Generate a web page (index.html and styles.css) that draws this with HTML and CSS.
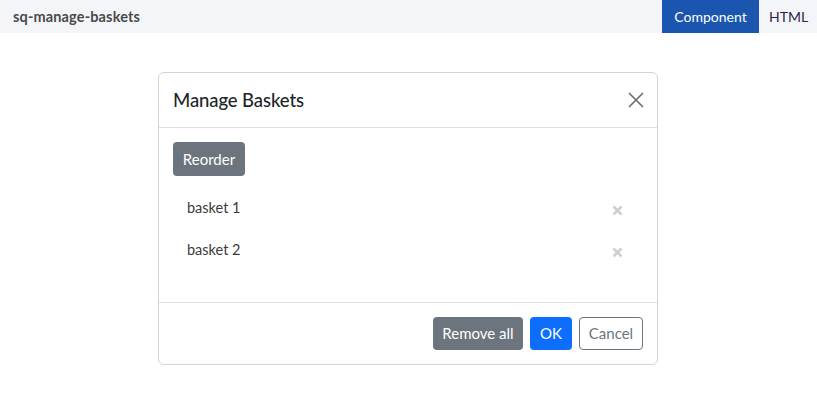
FILE: index.html
```html
<!DOCTYPE html>
<html>
<head>
<meta charset="utf-8">
<link rel="stylesheet" href="styles.css">
</head>
<body>
<div class="topbar">
  <div class="app-name">sq-manage-baskets</div>
  <div class="tabs">
    <div class="tab active">Component</div>
    <div class="tab">HTML</div>
  </div>
</div>
<div class="stage">
  <div class="modal">
    <div class="modal-header">
      <div class="modal-title">Manage Baskets</div>
      <button class="close-btn" aria-label="Close">
        <svg width="16" height="16" viewBox="0 0 16 16"><path d="M1 1L15 15M15 1L1 15" stroke="#6b6b6b" stroke-width="1.6" fill="none"/></svg>
      </button>
    </div>
    <div class="modal-body">
      <button class="btn btn-secondary btn-reorder">Reorder</button>
      <div class="basket-list">
        <div class="basket-item">
          <span class="basket-name">basket 1</span>
          <span class="remove-x"><svg width="11" height="11" viewBox="0 0 11 11"><path d="M1.5 1.5L9.5 9.5M9.5 1.5L1.5 9.5" stroke="#cfcfcf" stroke-width="2.6" fill="none"/></svg></span>
        </div>
        <div class="basket-item">
          <span class="basket-name">basket 2</span>
          <span class="remove-x"><svg width="11" height="11" viewBox="0 0 11 11"><path d="M1.5 1.5L9.5 9.5M9.5 1.5L1.5 9.5" stroke="#cfcfcf" stroke-width="2.6" fill="none"/></svg></span>
        </div>
      </div>
    </div>
    <div class="modal-footer">
      <button class="btn btn-secondary btn-remove">Remove all</button>
      <button class="btn btn-primary btn-ok">OK</button>
      <button class="btn btn-outline btn-cancel">Cancel</button>
    </div>
  </div>
</div>
</body>
</html>
```
FILE: styles.css
```css
* { box-sizing: border-box; }
body {
  margin: 0;
  font-family: Lato, "Noto Sans", sans-serif;
  color: #212529;
  background: #fff;
}
.topbar {
  display: flex;
  align-items: stretch;
  height: 33px;
  background: #f4f5f9;
}
.app-name {
  display: flex;
  align-items: center;
  padding-left: 13px;
  font-size: 14.5px;
  font-weight: 700;
  letter-spacing: 0.15px;
  color: #4a4a4a;
}
.tabs {
  margin-left: auto;
  display: flex;
}
.tab {
  display: flex;
  align-items: center;
  font-size: 14px;
  color: #2a1f4a;
  width: 58px;
  padding-left: 10px;
}
.tab.active {
  background: #1a55b0;
  color: #fff;
  width: 97px;
  justify-content: center;
  padding: 0;
}
.stage {
  display: flex;
  justify-content: center;
  padding-top: 39px;
  padding-right: 1px;
}
.modal {
  width: 500px;
  border: 1px solid #d4d4d4;
  border-radius: 6px;
  background: #fff;
}
.modal-header {
  height: 55px;
  border-bottom: 1px solid #dee2e6;
  display: flex;
  align-items: center;
  justify-content: space-between;
  padding: 0 13px 0 14px;
}
.modal-title {
  font-size: 18.5px;
  font-weight: 500;
  letter-spacing: -0.1px;
  color: #212529;
}
.close-btn {
  border: 0;
  background: none;
  padding: 0;
  width: 16px;
  height: 16px;
  display: flex;
}
.modal-body {
  height: 174px;
  padding: 14px;
}
.btn {
  font-family: inherit;
  font-size: 15px;
  border-radius: 4px;
  border: 1px solid transparent;
  padding: 0 12px;
  height: 34px;
  line-height: 1;
}
.btn-secondary { background: #6c757d; color: #fff; }
.btn-primary { background: #0d6efd; color: #fff; }
.btn-outline { background: #fff; color: #6c757d; border-color: #6c757d; }
.btn-reorder { width: 72px; padding: 0; }
.basket-list {
  margin-top: 10px;
}
.basket-item {
  height: 42px;
  display: flex;
  align-items: center;
  justify-content: space-between;
  padding: 0 20px 0 14px;
  font-size: 14.5px;
  color: #3b3b3b;
}
.remove-x {
  display: flex;
  margin-top: 7px;
}
.modal-footer {
  border-top: 1px solid #dee2e6;
  height: 62px;
  display: flex;
  align-items: center;
  justify-content: flex-end;
  gap: 7px;
  padding: 0 14px;
}
.modal-footer .btn { height: 33px; }
.btn-remove { width: 90px; padding: 0; }
.btn-ok { width: 42px; padding: 0; }
.btn-cancel { width: 64px; padding: 0; }
```
